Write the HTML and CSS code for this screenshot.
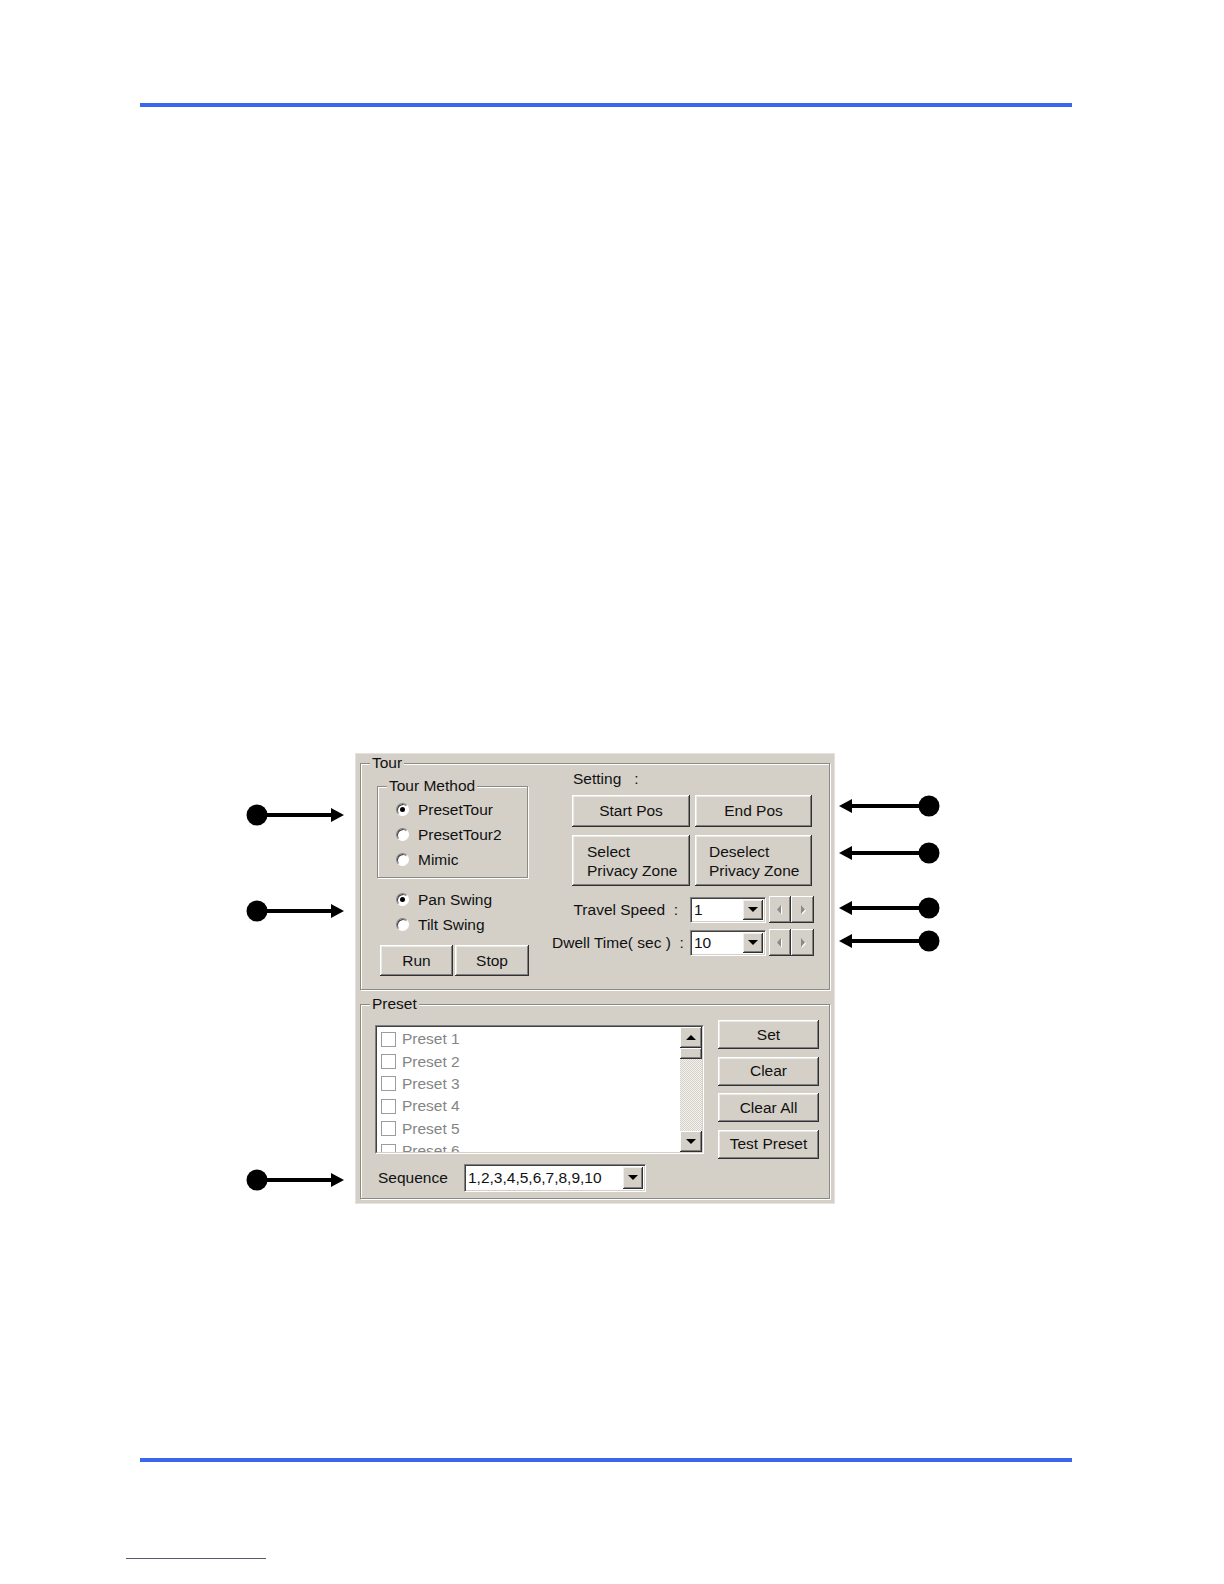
FILE: index.html
```html
<!DOCTYPE html>
<html>
<head>
<meta charset="utf-8">
<title>Tour settings</title>
<link rel="stylesheet" href="styles.css">
</head>
<body>
<div class="page">
  <div class="rule"></div>

  <div class="figure">
    <svg class="callout cl-1" width="100" height="24" viewBox="0 0 100 24"><circle cx="11" cy="12" r="10.5"/><rect x="11" y="10" width="76" height="4"/><polygon points="85,5 98,12 85,19"/></svg>
    <svg class="callout cl-2" width="100" height="24" viewBox="0 0 100 24"><circle cx="11" cy="12" r="10.5"/><rect x="11" y="10" width="76" height="4"/><polygon points="85,5 98,12 85,19"/></svg>
    <svg class="callout cl-3" width="100" height="24" viewBox="0 0 100 24"><circle cx="11" cy="12" r="10.5"/><rect x="11" y="10" width="76" height="4"/><polygon points="85,5 98,12 85,19"/></svg>

    <svg class="callout cr cr-1" width="104" height="24" viewBox="0 0 104 24"><polygon points="1,12 14,5 14,19"/><rect x="12" y="10" width="80" height="4"/><circle cx="91" cy="12" r="10.5"/></svg>
    <svg class="callout cr cr-2" width="104" height="24" viewBox="0 0 104 24"><polygon points="1,12 14,5 14,19"/><rect x="12" y="10" width="80" height="4"/><circle cx="91" cy="12" r="10.5"/></svg>
    <svg class="callout cr cr-3" width="104" height="24" viewBox="0 0 104 24"><polygon points="1,12 14,5 14,19"/><rect x="12" y="10" width="80" height="4"/><circle cx="91" cy="12" r="10.5"/></svg>
    <svg class="callout cr cr-4" width="104" height="24" viewBox="0 0 104 24"><polygon points="1,12 14,5 14,19"/><rect x="12" y="10" width="80" height="4"/><circle cx="91" cy="12" r="10.5"/></svg>

    <div class="panel">
      <div class="group tour">
        <span class="group-label">Tour</span>
        <div class="tour-body">
          <div class="tour-left">
            <div class="group method">
              <span class="group-label">Tour Method</span>
              <div class="radio-row"><span class="radio checked"></span><span>PresetTour</span></div>
              <div class="radio-row"><span class="radio"></span><span>PresetTour2</span></div>
              <div class="radio-row"><span class="radio"></span><span>Mimic</span></div>
            </div>
            <div class="swing">
              <div class="radio-row"><span class="radio checked"></span><span>Pan Swing</span></div>
              <div class="radio-row"><span class="radio"></span><span>Tilt Swing</span></div>
            </div>
            <div class="run-stop">
              <div class="btn run">Run</div>
              <div class="btn stop">Stop</div>
            </div>
          </div>

          <div class="tour-right">
            <div class="setting-title">Setting &nbsp;&nbsp;:</div>
            <div class="btn-row">
              <div class="btn w118">Start Pos</div>
              <div class="btn w117">End Pos</div>
            </div>
            <div class="btn-row tall">
              <div class="btn w118 left">Select<br>Privacy Zone</div>
              <div class="btn w117 left">Deselect<br>Privacy Zone</div>
            </div>
            <div class="param-row first">
              <span class="param-label">Travel Speed &nbsp;:</span>
              <div class="combo small">
                <span class="combo-text">1</span>
                <span class="drop"><svg width="10" height="6" viewBox="0 0 10 6"><polygon points="0,0 10,0 5,5"/></svg></span>
              </div>
              <div class="spin">
                <span class="spin-btn"><svg width="8" height="10" viewBox="0 0 8 10"><polygon class="hl" points="6,1 6,10 2,5.5"/><polygon class="sh" points="5,0 5,9 1,4.5"/></svg></span>
                <span class="spin-btn"><svg width="8" height="10" viewBox="0 0 8 10"><polygon class="hl" points="3,1 3,10 7,5.5"/><polygon class="sh" points="2,0 2,9 6,4.5"/></svg></span>
              </div>
            </div>
            <div class="param-row">
              <span class="param-label">Dwell Time( sec ) &nbsp;:</span>
              <div class="combo small">
                <span class="combo-text">10</span>
                <span class="drop"><svg width="10" height="6" viewBox="0 0 10 6"><polygon points="0,0 10,0 5,5"/></svg></span>
              </div>
              <div class="spin">
                <span class="spin-btn"><svg width="8" height="10" viewBox="0 0 8 10"><polygon class="hl" points="6,1 6,10 2,5.5"/><polygon class="sh" points="5,0 5,9 1,4.5"/></svg></span>
                <span class="spin-btn"><svg width="8" height="10" viewBox="0 0 8 10"><polygon class="hl" points="3,1 3,10 7,5.5"/><polygon class="sh" points="2,0 2,9 6,4.5"/></svg></span>
              </div>
            </div>
          </div>
        </div>
      </div>

      <div class="group preset">
        <span class="group-label">Preset</span>
        <div class="preset-top">
          <div class="listbox">
            <div class="listbox-inner">
              <div class="items">
                <div class="item"><span class="check"></span><span>Preset 1</span></div>
                <div class="item"><span class="check"></span><span>Preset 2</span></div>
                <div class="item"><span class="check"></span><span>Preset 3</span></div>
                <div class="item"><span class="check"></span><span>Preset 4</span></div>
                <div class="item"><span class="check"></span><span>Preset 5</span></div>
                <div class="item"><span class="check"></span><span>Preset 6</span></div>
              </div>
              <div class="scrollbar">
                <span class="sb-btn"><svg width="10" height="6" viewBox="0 0 10 6"><polygon points="0,5 10,5 5,0"/></svg></span>
                <span class="sb-thumb"></span>
                <span class="sb-track"></span>
                <span class="sb-btn"><svg width="10" height="6" viewBox="0 0 10 6"><polygon points="0,0 10,0 5,5"/></svg></span>
              </div>
            </div>
          </div>
          <div class="preset-buttons">
            <div class="btn pbtn">Set</div>
            <div class="btn pbtn">Clear</div>
            <div class="btn pbtn">Clear All</div>
            <div class="btn pbtn">Test Preset</div>
          </div>
        </div>
        <div class="sequence-row">
          <span class="seq-label">Sequence</span>
          <div class="combo seq">
            <span class="combo-text">1,2,3,4,5,6,7,8,9,10</span>
            <span class="drop"><svg width="10" height="6" viewBox="0 0 10 6"><polygon points="0,0 10,0 5,5"/></svg></span>
          </div>
        </div>
      </div>
    </div>
  </div>

  <div class="rule bottom"></div>
  <div class="footnote"></div>
</div>
</body>
</html>
```

FILE: styles.css
```css
* { box-sizing: border-box; }

html, body {
  margin: 0;
  padding: 0;
  background: #ffffff;
  overflow: hidden;
}

html { height: 1584px; }

body {
  height: 1584px;
  font-family: "Liberation Sans", Arial, sans-serif;
  font-size: 15.5px;
  color: #111;
}

.page {
  padding-top: 103px;
}

.rule {
  margin-left: 140px;
  width: 932px;
  height: 4px;
  background: #3c66f0;
}

.rule.bottom {
  margin-top: 254px;
}

.footnote {
  margin: 96px 0 0 126px;
  width: 140px;
  height: 1px;
  background: #5a5a6a;
}

/* figure */
.figure {
  position: relative;
  margin-top: 646px;
  height: 451px;
}

.callout {
  position: absolute;
  fill: #000;
}
.cl-1 { left: 246px; top: 50px; }
.cl-2 { left: 246px; top: 146px; }
.cl-3 { left: 246px; top: 415px; }
.cr-1 { left: 838px; top: 41px; }
.cr-2 { left: 838px; top: 88px; }
.cr-3 { left: 838px; top: 143px; }
.cr-4 { left: 838px; top: 176px; }

.panel {
  margin-left: 355px;
  width: 480px;
  height: 451px;
  background: #d4d0c8;
  border: 1px solid #e4e2dc;
  padding: 9px 4px 3px 4px;
  line-height: 18px;
}

/* group boxes */
.group {
  position: relative;
  border: 1px solid #8c8a84;
  box-shadow: inset 1px 1px 0 #fff, 1px 1px 0 #fff;
}

.group-label {
  position: absolute;
  top: -10px;
  left: 9px;
  padding: 0 2px;
  background: #d4d0c8;
  line-height: 18px;
}

.tour {
  height: 227px;
}

.tour-body {
  display: flex;
  padding-left: 16px;
}

.tour-left {
  width: 152px;
  padding-top: 22px;
}

.method {
  width: 151px;
  height: 92px;
  padding: 10px 0 0 18px;
}

.radio-row {
  display: flex;
  align-items: center;
  height: 25px;
  gap: 9px;
}

.radio {
  position: relative;
  width: 13px;
  height: 13px;
  border-radius: 50%;
  background: #fff;
  border: 1px solid;
  border-color: #808080 #fff #fff #808080;
  box-shadow: inset 1px 1px 0 #404040;
  flex: none;
}

.radio.checked::after {
  content: "";
  position: absolute;
  left: 3px;
  top: 3px;
  width: 5px;
  height: 5px;
  border-radius: 50%;
  background: #000;
}

.swing {
  margin-top: 9px;
  padding-left: 19px;
}

.run-stop {
  display: flex;
  gap: 2px;
  margin: 8px 0 0 3px;
}

/* buttons */
.btn {
  display: flex;
  align-items: center;
  justify-content: center;
  text-align: center;
  background: #d4d0c8;
  box-shadow:
    inset -1px -1px 0 #303030,
    inset 1px 1px 0 #ffffff,
    inset -2px -2px 0 #808080,
    inset 2px 2px 0 #ebe9e4;
  color: #111;
}

.run { width: 74px; height: 31px; }
.stop { width: 75px; height: 31px; }

.tour-right {
  width: 262px;
  margin-left: 23px;
  padding-top: 6px;
}

.setting-title {
  padding-left: 21px;
  height: 18px;
}

.btn-row {
  display: flex;
  gap: 5px;
  margin-top: 7px;
  padding-left: 20px;
}

.btn-row .btn { height: 32px; }
.btn-row.tall { margin-top: 8px; }
.btn-row.tall .btn { height: 51px; line-height: 19px; padding-top: 1px; }

.w118 { width: 118px; }
.w117 { width: 117px; }

.btn.left {
  justify-content: flex-start;
  text-align: left;
  padding-left: 15px;
}
.btn-row .btn.w117.left { padding-left: 14px; }

.param-row {
  display: flex;
  align-items: center;
  height: 27px;
  margin-top: 6px;
}
.param-row.first { margin-top: 10px; }

.param-label {
  width: 126px;
  text-align: right;
  white-space: nowrap;
}

/* combo */
.combo {
  position: relative;
  display: flex;
  align-items: center;
  background: #fff;
  border: 1px solid;
  border-color: #808080 #fff #fff #808080;
  box-shadow: inset 1px 1px 0 #404040, inset -1px -1px 0 #d4d0c8;
  padding: 2px 2px 2px 3px;
}

.combo.small {
  width: 76px;
  height: 26px;
  margin-left: 12px;
}

.combo-text {
  flex: 1;
  white-space: nowrap;
  overflow: hidden;
}

.drop {
  width: 20px;
  align-self: stretch;
  display: flex;
  align-items: center;
  justify-content: center;
  background: #d4d0c8;
  box-shadow:
    inset -1px -1px 0 #303030,
    inset 1px 1px 0 #eeeeee,
    inset -2px -2px 0 #808080;
  fill: #000;
}

.spin {
  display: flex;
  margin-left: 3px;
  height: 27px;
}

.spin-btn {
  width: 22px;
  height: 27px;
  display: flex;
  align-items: center;
  justify-content: center;
  background: #d4d0c8;
  box-shadow:
    inset -1px -1px 0 #303030,
    inset 1px 1px 0 #ffffff,
    inset -2px -2px 0 #808080;
}
.spin-btn + .spin-btn { width: 23px; }
.spin-btn .hl { fill: #ffffff; }
.spin-btn .sh { fill: #8a8a8a; }

/* preset */
.preset {
  margin-top: 14px;
  height: 195px;
  padding: 15px 0 0 14px;
}

.preset-top {
  display: flex;
  align-items: flex-start;
  height: 138px;
}

.listbox {
  margin-top: 5px;
  width: 329px;
  height: 129px;
  border: 1px solid;
  border-color: #808080 #ffffff #ffffff #808080;
}

.listbox-inner {
  display: flex;
  height: 100%;
  background: #fff;
  border: 1px solid;
  border-color: #404040 #d4d0c8 #d4d0c8 #404040;
}

.items {
  flex: 1;
  overflow: hidden;
  padding-top: 1px;
}

.item {
  display: flex;
  align-items: center;
  gap: 6px;
  height: 22.4px;
  padding-left: 4px;
  color: #858585;
}

.check {
  width: 15px;
  height: 15px;
  border: 1px solid #9c9c9c;
  background: #fff;
  flex: none;
}

.scrollbar {
  width: 22px;
  display: flex;
  flex-direction: column;
}

.sb-btn {
  height: 21px;
  display: flex;
  align-items: center;
  justify-content: center;
  background: #d4d0c8;
  fill: #000;
  box-shadow:
    inset -1px -1px 0 #303030,
    inset 1px 1px 0 #ffffff,
    inset -2px -2px 0 #808080;
}

.sb-thumb {
  height: 11px;
  background: #d4d0c8;
  box-shadow:
    inset -1px -1px 0 #303030,
    inset 1px 1px 0 #ffffff,
    inset -2px -2px 0 #808080;
}

.sb-track {
  flex: 1;
  background: repeating-conic-gradient(#d4d0c8 0 25%, #f4f3f0 0 50%) 0 0 / 2px 2px;
}

.preset-buttons {
  display: flex;
  flex-direction: column;
  gap: 7.5px;
  margin-left: 14px;
}

.pbtn {
  width: 101px;
  height: 29px;
}

.sequence-row {
  display: flex;
  align-items: center;
  margin-top: 6px;
  padding-left: 3px;
}

.seq-label {
  width: 86px;
}

.combo.seq {
  width: 182px;
  height: 28px;
}
```
